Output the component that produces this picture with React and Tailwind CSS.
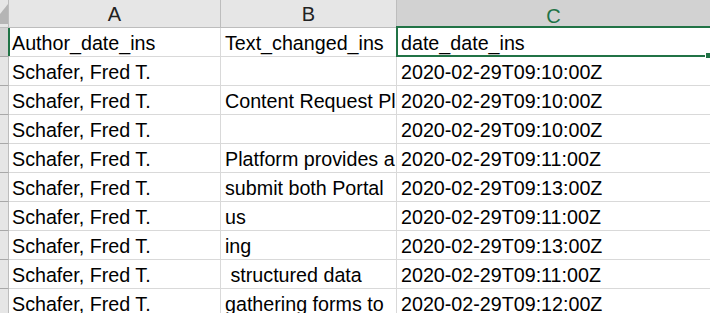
import React from "react";

const rows = [
  ["Author_date_ins", "Text_changed_ins", "date_date_ins"],
  ["Schafer, Fred T.", "", "2020-02-29T09:10:00Z"],
  ["Schafer, Fred T.", "Content Request Platform", "2020-02-29T09:10:00Z"],
  ["Schafer, Fred T.", "", "2020-02-29T09:10:00Z"],
  ["Schafer, Fred T.", "Platform provides a single", "2020-02-29T09:11:00Z"],
  ["Schafer, Fred T.", "submit both Portal \u00a0 \u00a0and", "2020-02-29T09:13:00Z"],
  ["Schafer, Fred T.", "us", "2020-02-29T09:11:00Z"],
  ["Schafer, Fred T.", "ing", "2020-02-29T09:13:00Z"],
  ["Schafer, Fred T.", "\u00a0structured data", "2020-02-29T09:11:00Z"],
  ["Schafer, Fred T.", "gathering forms to \u00a0 \u00a0the", "2020-02-29T09:12:00Z"],
];

export default function App() {
  return (
    <div
      className="relative w-[710px] h-[313px] overflow-hidden bg-white text-black"
      style={{ fontFamily: '"Liberation Sans", Arial, sans-serif' }}
    >
      {/* header row */}
      <div className="flex h-[28px]">
        <div className="relative w-[9px] shrink-0 h-full bg-[#e6e6e6] border-r border-b border-[#bdbdbd]">
          <svg className="absolute left-0 top-0" width="8" height="27" viewBox="0 0 8 27">
            <polygon points="8,4 8,24 0,24 0,14" fill="#b5b5b5" />
          </svg>
        </div>
        <div className="w-[212px] shrink-0 h-full bg-[#e6e6e6] border-r border-b border-[#bdbdbd] flex items-center justify-center text-[20px] text-[#222] pt-[1px]">
          A
        </div>
        <div className="w-[176px] shrink-0 h-full bg-[#e6e6e6] border-r border-b border-[#bdbdbd] flex items-center justify-center text-[20px] text-[#222] pt-[1px]">
          B
        </div>
        <div className="flex-1 h-full bg-[#d2d2d2] border-b-2 border-[#217346] flex items-start justify-center text-[20px] text-[#217346] pt-[1px]">
          <span>C</span>
        </div>
      </div>

      {rows.map((r, i) => (
        <div key={i} className="flex h-[29px]">
          <div
            className={
              "w-[9px] shrink-0 h-full border-r border-b border-b-[#a8a8a8] border-r-[#bdbdbd] " +
              (i === 0 ? "bg-[#d2d2d2]" : "bg-[#e6e6e6]")
            }
          />
          <div className="w-[212px] shrink-0 h-full border-r border-b border-[#d9d9d9] overflow-hidden whitespace-nowrap text-[19.7px] leading-[28px] pt-[1px] pl-[3px]">
            {r[0]}
          </div>
          <div className="w-[176px] shrink-0 h-full border-r border-b border-[#d9d9d9] overflow-hidden whitespace-nowrap text-[19.7px] leading-[28px] pt-[1px] pl-[4px]">
            {r[1]}
          </div>
          <div className="flex-1 h-full border-b border-[#d9d9d9] overflow-hidden whitespace-nowrap text-[19.7px] leading-[28px] pt-[1px] pl-[4px]">
            {r[2]}
          </div>
        </div>
      ))}

      {/* selection */}
      <div className="absolute left-[396px] top-[26px] w-[340px] h-[31px] border-2 border-[#217346]" />
      <div className="absolute left-[8px] top-[28px] w-[2px] h-[28px] bg-[#217346]" />
      <div className="absolute left-[705px] top-[52px] w-[7px] h-[7px] bg-[#217346] border border-white" />
    </div>
  );
}
